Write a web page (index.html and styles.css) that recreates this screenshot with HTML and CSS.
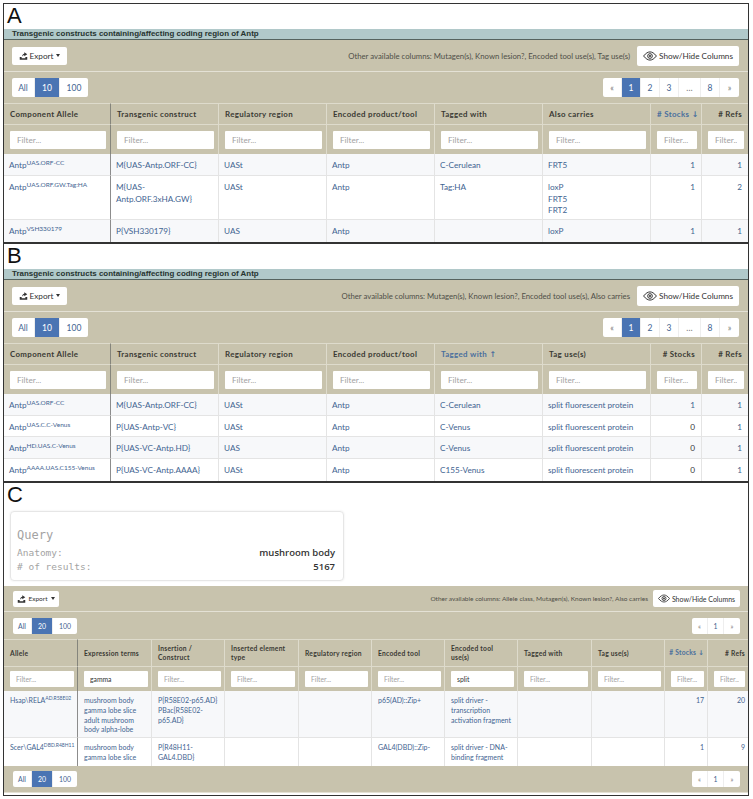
FILE: index.html
```html
<!DOCTYPE html>
<html lang="en">
<head>
  <meta charset="UTF-8">
  <title>Transgenic constructs</title>
  <link rel="stylesheet" href="styles.css">
</head>
<body>
  <svg class="defs" width="0" height="0">
    <symbol id="eye" viewBox="0 0 24 16">
      <path d="M1 8C5 3 8.500 1 12 1s7 2 11 7c-4 5-7.500 7-11 7S5 13 1 8z" fill="none" stroke="currentColor" stroke-width="1.700"/>
      <circle cx="12" cy="8" r="4" fill="none" stroke="currentColor" stroke-width="1.700"/>
      <circle cx="12" cy="8" r="1.800" fill="currentColor"/>
    </symbol>
    <symbol id="export" viewBox="0 0 12 12">
      <path d="M1 8h2.500v1.500h5V8H11v3.500H1z" fill="currentColor"/>
      <path d="M4 7.500C4 5 5.500 3.800 7 3.500V1.500L11 4.300 7 7V5.200C5.800 5.300 4.800 6 4 7.500z" fill="currentColor"/>
    </symbol>
  </svg>

  <section class="panel">
    <div class="letter">A</div>
    <div class="title">Transgenic constructs containing/affecting coding region of Antp</div>
    <div class="toolbar">
      <button class="export"><svg class="export-icon"><use href="#export"/></svg> Export <span class="caret"></span></button>
      <span class="other">Other available columns: Mutagen(s), Known lesion?, Encoded tool use(s), Tag use(s)</span>
      <button class="show"><svg class="eye-icon"><use href="#eye"/></svg> Show/Hide Columns</button>
    </div>
    <div class="pagerow">
      <div class="pager">
        <a class="w-all">All</a><a class="w-ten active">10</a><a class="w-hun">100</a>
      </div>
      <div class="pager">
        <a class="w-p muted">«</a><a class="w-p active">1</a><a class="w-p">2</a><a class="w-p">3</a><a class="w-dots muted">…</a><a class="w-p">8</a><a class="w-p muted">»</a>
      </div>
    </div>
    <table class="grid wide">
      <colgroup><col class="c107"><col class="c108"><col class="c108"><col class="c108"><col class="c108"><col class="c108"><col class="c51"><col class="c46"></colgroup>
      <thead>
        <tr>
          <th>Component Allele</th><th>Transgenic construct</th><th>Regulatory region</th><th>Encoded product/tool</th><th>Tagged with</th><th>Also carries</th><th class="num sorted"># Stocks <span class="arrow">↓</span></th><th class="num"># Refs</th>
        </tr>
        <tr class="filters">
          <th><input placeholder="Filter..."></th><th><input placeholder="Filter..."></th><th><input placeholder="Filter..."></th><th><input placeholder="Filter..."></th><th><input placeholder="Filter..."></th><th><input placeholder="Filter..."></th><th><input placeholder="Filter..."></th><th><input placeholder="Filter..."></th>
        </tr>
      </thead>
      <tbody>
        <tr>
          <td><a>Antp<sup>UAS.ORF-CC</sup></a></td><td><a>M{UAS-Antp.ORF-CC}</a></td><td><a>UASt</a></td><td><a>Antp</a></td><td><a>C-Cerulean</a></td><td><a>FRT5</a></td><td class="num"><a>1</a></td><td class="num"><a>1</a></td>
        </tr>
        <tr>
          <td><a>Antp<sup>UAS.ORF.GW.Tag:HA</sup></a></td><td><a>M{UAS-<br>Antp.ORF.3xHA.GW}</a></td><td><a>UASt</a></td><td><a>Antp</a></td><td><a>Tag:HA</a></td><td><a>loxP<br>FRT5<br>FRT2</a></td><td class="num"><a>1</a></td><td class="num"><a>2</a></td>
        </tr>
        <tr>
          <td><a>Antp<sup>VSH330179</sup></a></td><td><a>P{VSH330179}</a></td><td><a>UAS</a></td><td><a>Antp</a></td><td></td><td><a>loxP</a></td><td class="num"><a>1</a></td><td class="num"><a>1</a></td>
        </tr>
      </tbody>
    </table>
  </section>

  <section class="panel">
    <div class="letter">B</div>
    <div class="title">Transgenic constructs containing/affecting coding region of Antp</div>
    <div class="toolbar">
      <button class="export"><svg class="export-icon"><use href="#export"/></svg> Export <span class="caret"></span></button>
      <span class="other">Other available columns: Mutagen(s), Known lesion?, Encoded tool use(s), Also carries</span>
      <button class="show"><svg class="eye-icon"><use href="#eye"/></svg> Show/Hide Columns</button>
    </div>
    <div class="pagerow">
      <div class="pager">
        <a class="w-all">All</a><a class="w-ten active">10</a><a class="w-hun">100</a>
      </div>
      <div class="pager">
        <a class="w-p muted">«</a><a class="w-p active">1</a><a class="w-p">2</a><a class="w-p">3</a><a class="w-dots muted">…</a><a class="w-p">8</a><a class="w-p muted">»</a>
      </div>
    </div>
    <table class="grid wide">
      <colgroup><col class="c107"><col class="c108"><col class="c108"><col class="c108"><col class="c108"><col class="c108"><col class="c51"><col class="c46"></colgroup>
      <thead>
        <tr>
          <th>Component Allele</th><th>Transgenic construct</th><th>Regulatory region</th><th>Encoded product/tool</th><th class="sorted">Tagged with <span class="arrow">↑</span></th><th>Tag use(s)</th><th class="num"># Stocks</th><th class="num"># Refs</th>
        </tr>
        <tr class="filters">
          <th><input placeholder="Filter..."></th><th><input placeholder="Filter..."></th><th><input placeholder="Filter..."></th><th><input placeholder="Filter..."></th><th><input placeholder="Filter..."></th><th><input placeholder="Filter..."></th><th><input placeholder="Filter..."></th><th><input placeholder="Filter..."></th>
        </tr>
      </thead>
      <tbody>
        <tr>
          <td><a>Antp<sup>UAS.ORF-CC</sup></a></td><td><a>M{UAS-Antp.ORF-CC}</a></td><td><a>UASt</a></td><td><a>Antp</a></td><td><a>C-Cerulean</a></td><td><a>split fluorescent protein</a></td><td class="num"><a>1</a></td><td class="num"><a>1</a></td>
        </tr>
        <tr>
          <td><a>Antp<sup>UAS.C.C-Venus</sup></a></td><td><a>P{UAS-Antp-VC}</a></td><td><a>UASt</a></td><td><a>Antp</a></td><td><a>C-Venus</a></td><td><a>split fluorescent protein</a></td><td class="num">0</td><td class="num"><a>1</a></td>
        </tr>
        <tr>
          <td><a>Antp<sup>HD.UAS.C-Venus</sup></a></td><td><a>P{UAS-VC-Antp.HD}</a></td><td><a>UAS</a></td><td><a>Antp</a></td><td><a>C-Venus</a></td><td><a>split fluorescent protein</a></td><td class="num">0</td><td class="num"><a>1</a></td>
        </tr>
        <tr>
          <td><a>Antp<sup>AAAA.UAS.C155-Venus</sup></a></td><td><a>P{UAS-VC-Antp.AAAA}</a></td><td><a>UASt</a></td><td><a>Antp</a></td><td><a>C155-Venus</a></td><td><a>split fluorescent protein</a></td><td class="num">0</td><td class="num"><a>1</a></td>
        </tr>
      </tbody>
    </table>
  </section>

  <section class="panel panel-c">
    <div class="letter letter-c">C</div>
    <div class="query">
      <div class="query-title">Query</div>
      <div class="query-row"><span>Anatomy:</span><b>mushroom body</b></div>
      <div class="query-row"><span># of results:</span><b>5167</b></div>
    </div>
    <div class="toolbar small">
      <button class="export"><svg class="export-icon"><use href="#export"/></svg> Export <span class="caret"></span></button>
      <span class="other">Other available columns: Allele class, Mutagen(s), Known lesion?, Also carries</span>
      <button class="show"><svg class="eye-icon"><use href="#eye"/></svg> Show/Hide Columns</button>
    </div>
    <div class="pagerow small">
      <div class="pager">
        <a class="w-all">All</a><a class="w-ten active">20</a><a class="w-hun">100</a>
      </div>
      <div class="pager">
        <a class="w-p muted">«</a><a class="w-p">1</a><a class="w-p muted">»</a>
      </div>
    </div>
    <table class="grid narrow">
      <colgroup><col class="c74"><col class="c74"><col class="c73"><col class="c74"><col class="c73"><col class="c73"><col class="c73"><col class="c74"><col class="c73"><col class="c43"><col class="c40"></colgroup>
      <thead>
        <tr>
          <th>Allele</th><th>Expression terms</th><th>Insertion /<br>Construct</th><th>Inserted element<br>type</th><th>Regulatory region</th><th>Encoded tool</th><th>Encoded tool<br>use(s)</th><th>Tagged with</th><th>Tag use(s)</th><th class="num sorted"># Stocks <span class="arrow">↓</span></th><th class="num"># Refs</th>
        </tr>
        <tr class="filters">
          <th><input placeholder="Filter..."></th><th><input value="gamma"></th><th><input placeholder="Filter..."></th><th><input placeholder="Filter..."></th><th><input placeholder="Filter..."></th><th><input placeholder="Filter..."></th><th><input value="split"></th><th><input placeholder="Filter..."></th><th><input placeholder="Filter..."></th><th><input placeholder="Filter..."></th><th><input placeholder="Filter..."></th>
        </tr>
      </thead>
      <tbody>
        <tr>
          <td><a>Hsap\RELA<sup>AD.R58E02</sup></a></td><td><a>mushroom body gamma lobe slice<br>adult mushroom body alpha-lobe</a></td><td><a>P{R58E02-p65.AD}<br>PBac{R58E02-<br>p65.AD}</a></td><td></td><td></td><td><a>p65(AD)::Zip+</a></td><td><a>split driver - transcription activation fragment</a></td><td></td><td></td><td class="num"><a>17</a></td><td class="num"><a>20</a></td>
        </tr>
        <tr>
          <td><a>Scer\GAL4<sup>DBD.R48H11</sup></a></td><td><a>mushroom body gamma lobe slice</a></td><td><a>P{R48H11-<br>GAL4.DBD}</a></td><td></td><td></td><td><a>GAL4(DBD)::Zip-</a></td><td><a>split driver - DNA-binding fragment</a></td><td></td><td></td><td class="num"><a>1</a></td><td class="num"><a>9</a></td>
        </tr>
      </tbody>
    </table>
    <div class="pagerow small footer">
      <div class="pager">
        <a class="w-all">All</a><a class="w-ten active">20</a><a class="w-hun">100</a>
      </div>
      <div class="pager">
        <a class="w-p muted">«</a><a class="w-p">1</a><a class="w-p muted">»</a>
      </div>
    </div>
  </section>
</body>
</html>
```

FILE: styles.css
```css
* {
  box-sizing: border-box;
}

body {
  margin: 3px 4px 0 3px;
  background-color: #fff;
  font-family: Lato, sans-serif;
  color: #333;
}

.defs {
  display: block;
  height: 0;
}

a {
  color: #3f6491;
  text-decoration: none;
}

.panel {
  border: 1px solid #333;
  background-color: #fff;
  height: 240px;
}

.panel + .panel {
  height: 239px;
}

.panel.panel-c {
  height: 314px;
}

.letter {
  height: 25px;
  padding-left: 3px;
  font-family: "Liberation Sans", sans-serif;
  font-size: 22px;
  line-height: 24px;
  color: #111;
}

.letter-c {
  height: 28px;
}

.title {
  height: 11px;
  padding-left: 8px;
  background-color: #b1c9ca;
  border-bottom: 1px solid #55635f;
  font-family: "Liberation Sans", sans-serif;
  font-size: 7.950px;
  font-weight: bold;
  line-height: 10px;
  color: #26332f;
}

.toolbar {
  height: 32px;
  display: flex;
  align-items: center;
  padding: 0 9px 0 8px;
  background-color: #c8c3ad;
  border-bottom: 1px solid #e4e1d5;
}

.other {
  margin-left: auto;
  margin-right: 7px;
  font-size: 7.750px;
  color: #4f4f48;
  white-space: nowrap;
}

button {
  border: none;
  background-color: #fff;
  border-radius: 2px;
  font-family: inherit;
  color: #333;
  padding: 0;
  white-space: nowrap;
}

.export {
  width: 55px;
  height: 18px;
  font-size: 8.200px;
  display: flex;
  align-items: center;
  justify-content: center;
  gap: 2px;
}

.export-icon {
  width: 9px;
  height: 9px;
}

.caret {
  width: 0;
  height: 0;
  margin-left: 1px;
  border-left: 2.500px solid transparent;
  border-right: 2.500px solid transparent;
  border-top: 3px solid #333;
}

.show {
  width: 102px;
  height: 20px;
  font-size: 8.200px;
  display: flex;
  align-items: center;
  justify-content: center;
  gap: 2px;
}

.eye-icon {
  width: 14px;
  height: 10px;
}

.pagerow {
  height: 31px;
  display: flex;
  align-items: center;
  justify-content: space-between;
  padding: 0 9px 0 8px;
  background-color: #c8c3ad;
}

.pager {
  display: flex;
  height: 19px;
  background-color: #fff;
  border-radius: 2px;
  font-size: 8.500px;
  overflow: hidden;
}

.pager a {
  display: flex;
  align-items: center;
  justify-content: center;
  border-right: 1px solid #eee;
}

.pager a:last-child {
  border-right: none;
}

.pager .active {
  background-color: #4a74b3;
  color: #fff;
}

.pager .muted {
  color: #777;
}

.w-all {
  width: 23px;
}

.w-ten {
  width: 25px;
}

.w-hun {
  width: 28px;
}

.w-p {
  width: 19px;
}

.w-dots {
  width: 22px;
}

.grid {
  width: 100%;
  border-collapse: separate;
  border-spacing: 0;
  table-layout: fixed;
}

.c107 { width: 107px; }
.c108 { width: 108px; }
.c51 { width: 51px; }
.c46 { width: 46px; }
.c74 { width: 74px; }
.c73 { width: 73px; }
.c43 { width: 43px; }
.c40 { width: 40px; }

th {
  background-color: #c8c3ad;
  border-right: 1px solid #dedbcc;
  border-top: 1px solid #dedbcc;
  text-align: left;
  font-weight: 700;
  color: #3a3a34;
}

th:first-child {
  border-right-color: #85857c;
}

.filters th {
  font-weight: normal;
}

td {
  vertical-align: top;
  border-right: 1px solid #e4e4e4;
  border-bottom: 1px solid #e4e4e4;
}

td:first-child {
  border-right-color: #8c8c8c;
}

th:last-child,
td:last-child {
  border-right: none;
}

tbody tr:nth-child(odd) td {
  background-color: #f7f8fa;
}

tbody tr:last-child td {
  border-bottom: none;
}

.num {
  text-align: right;
}

.sorted {
  color: #4a6f9d;
}

.arrow {
  font-family: "DejaVu Sans", sans-serif;
  font-weight: bold;
}

sup {
  vertical-align: baseline;
  position: relative;
  top: -3px;
  line-height: 0;
}

input {
  display: block;
  width: 100%;
  border: none;
  border-radius: 1px;
  background-color: #fff;
  font-family: inherit;
  color: #333;
}

input::placeholder {
  color: #a2a2a2;
  opacity: 1;
}

/* panels A and B */
.wide th {
  height: 21px;
  padding: 0 6px;
  font-size: 7.900px;
  letter-spacing: 0.350px;
  white-space: nowrap;
}

.wide .filters th {
  height: 30px;
  padding: 0 4px 0 6px;
}

.wide input {
  height: 18px;
  padding: 0 7px;
  font-size: 8.200px;
  letter-spacing: 0;
}

.wide td {
  height: 22px;
  padding: 6px 6px 2px 5px;
  font-size: 8.200px;
  line-height: 11.500px;
}

.wide td.num {
  padding-right: 6px;
}

.panel + .panel .wide tbody tr:nth-child(2) td {
  height: 21px;
}

.wide sup {
  font-size: 6.500px;
}

/* panel C */
.query {
  width: 334px;
  height: 70px;
  margin: 0 0 5px 6px;
  padding: 16px 8px 0 6px;
  border: 1px solid #e6e6e6;
  border-radius: 4px;
  box-shadow: 0 0 2px rgba(0, 0, 0, 0.1);
}

.query-title {
  font-family: "DejaVu Sans Mono", monospace;
  font-size: 12px;
  line-height: 15px;
  margin-bottom: 3px;
  color: #a3a3a3;
}

.query-row {
  display: flex;
  justify-content: space-between;
  font-family: "DejaVu Sans Mono", monospace;
  font-size: 9.500px;
  line-height: 13.500px;
  color: #a3a3a3;
}

.query-row b {
  font-family: "Open Sans", sans-serif;
  font-size: 9.500px;
  font-weight: 600;
  color: #333;
}

.toolbar.small {
  height: 26px;
  padding: 0 8px 0 9px;
}

.small .other {
  font-size: 6.500px;
  margin-right: 5px;
}

.small .export {
  width: 46px;
  height: 16px;
  font-size: 6.500px;
}

.small .show {
  width: 87px;
  height: 17px;
  font-size: 7px;
}

.small .eye-icon {
  width: 12px;
  height: 9px;
}

.pagerow.small {
  height: 27px;
  padding: 0 8px 0 9px;
}

.small .pager {
  height: 16px;
  font-size: 6.900px;
}

.small .w-all {
  width: 19px;
}

.small .w-ten {
  width: 21px;
}

.small .w-hun {
  width: 24px;
}

.small .w-p {
  width: 16px;
}

.footer {
  border-bottom: 1px solid #e4e1d5;
}

.narrow th {
  height: 27px;
  padding: 0 3px 0 6px;
  font-size: 6.700px;
  line-height: 9px;
  letter-spacing: 0.250px;
}

.narrow th.num {
  padding: 0 3px 0 0;
  white-space: nowrap;
}

.narrow .filters th {
  height: 25px;
  padding: 0 3px 0 6px;
}

.narrow input {
  height: 16px;
  padding: 0 6px;
  font-size: 6.800px;
  letter-spacing: 0;
}

.narrow td {
  padding: 5px 3px 2px 6px;
  font-size: 7px;
  line-height: 9.800px;
}

.narrow tbody tr:first-child td {
  height: 47px;
}

.narrow tbody tr:last-child td {
  height: 28px;
}

.narrow sup {
  font-size: 5px;
}
```
